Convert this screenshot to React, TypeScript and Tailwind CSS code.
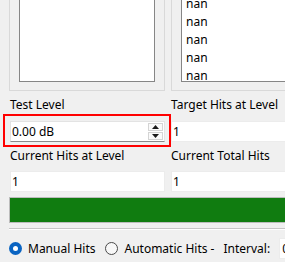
import React from 'react'

const FONT = { fontFamily: '"Noto Sans", "Open Sans", sans-serif' }

// Qt-ish line edit with a plain white face
function LineEdit({ value }: { value: string }) {
    return (
        <div className="h-[21px] bg-white border border-[#ececec] pl-[1px] flex items-center leading-none">
            {value}
        </div>
    )
}

function SpinBox({ value }: { value: string }) {
    return (
        <div className="h-[21px] bg-white border border-[#e3e3e3] border-b-[#8a8a8a] pl-[1px] pr-[1px] flex items-center justify-between leading-none">
            <span>{value}</span>
            <div className="flex flex-col gap-[1px] w-[15px] h-[17px]">
                <div className="flex-1 bg-[#fafafa] border border-[#d4d4d4] flex items-center justify-center">
                    <svg width="7" height="4" viewBox="0 0 7 4"><path d="M0 4 L3.5 0 L7 4 Z" fill="#1a1a1a" /></svg>
                </div>
                <div className="flex-1 bg-[#fafafa] border border-[#d4d4d4] flex items-center justify-center">
                    <svg width="7" height="4" viewBox="0 0 7 4"><path d="M0 0 L3.5 4 L7 0 Z" fill="#1a1a1a" /></svg>
                </div>
            </div>
        </div>
    )
}

function Radio({ checked }: { checked?: boolean }) {
    if (checked) {
        return (
            <div className="w-[13px] h-[13px] rounded-full bg-[#0a64c2] flex items-center justify-center shrink-0">
                <div className="w-[5px] h-[5px] rounded-full bg-white" />
            </div>
        )
    }
    return <div className="w-[13px] h-[13px] rounded-full border border-[#4a4a4a] bg-[#f7f7f7] shrink-0" />
}

export default function App() {
    const rows = ['nan', 'nan', 'nan', 'nan', 'nan']

    return (
        <div className="w-[285px] h-[262px] bg-[#f0f0f0] overflow-hidden relative text-[12px] text-black" style={FONT}>
            {/* Group boxes, cut off at the top */}
            <div className="flex h-[91px]">
                <div className="ml-[9px] w-[156px] shrink-0 border-x border-b border-[#d9d9d9] px-[9px] pb-[8px]">
                    <div className="h-full bg-white border-x border-b border-[#868686]" />
                </div>
                <div className="ml-[6px] w-[200px] shrink-0 border-l border-b border-[#d9d9d9] pl-[9px] pb-[8px]">
                    <div className="h-full bg-white border-l border-b border-[#868686] pl-[4px] overflow-hidden">
                        <div className="-mt-[5px]">
                            {rows.map((r, i) => (
                                <div key={i} className="h-[18px] leading-[18px]">{r}</div>
                            ))}
                        </div>
                    </div>
                </div>
            </div>

            {/* Level fields */}
            <div className="pl-[10px] grid grid-cols-[155px_200px] gap-x-[6px]">
                <div className="mt-[6px] h-[16px] leading-[16px]">Test Level</div>
                <div className="mt-[6px] h-[16px] leading-[16px] whitespace-nowrap">Target Hits at Level</div>
                <div className="mt-[8px]"><SpinBox value="0.00 dB" /></div>
                <div className="mt-[8px]"><LineEdit value="1" /></div>
                <div className="mt-[6px] h-[16px] leading-[16px] whitespace-nowrap">Current Hits at Level</div>
                <div className="mt-[6px] h-[16px] leading-[16px] whitespace-nowrap">Current Total Hits</div>
                <div className="mt-[7px]"><LineEdit value="1" /></div>
                <div className="mt-[7px]"><LineEdit value="1" /></div>
            </div>

            {/* Progress bar */}
            <div className="ml-[9px] mt-[5px] w-[300px] h-[26px] border border-[#bcbcbc] bg-[#e6e6e6]">
                <div className="h-full bg-[#107c10]" />
            </div>

            {/* Separator */}
            <div className="ml-[9px] mt-[5px] border-t border-[#c6c6c6] border-b border-b-white" />

            {/* Mode row */}
            <div className="pl-[9px] mt-[12px] h-[13px] flex items-center whitespace-nowrap">
                <Radio checked />
                <span className="ml-[6px]">Manual Hits</span>
                <span className="ml-[10px]"><Radio /></span>
                <span className="ml-[6px]">Automatic Hits -</span>
                <span className="ml-[9px]">Interval:</span>
                <div className="ml-[9px] w-[60px] h-[21px] bg-white border border-[#ececec] pl-[2px] flex items-center shrink-0">0</div>
            </div>

            {/* Highlight box drawn over the Test Level field */}
            <div className="absolute left-[3px] top-[114px] w-[168px] h-[33px] border-2 border-[#ff0000] pointer-events-none" />
        </div>
    )
}
